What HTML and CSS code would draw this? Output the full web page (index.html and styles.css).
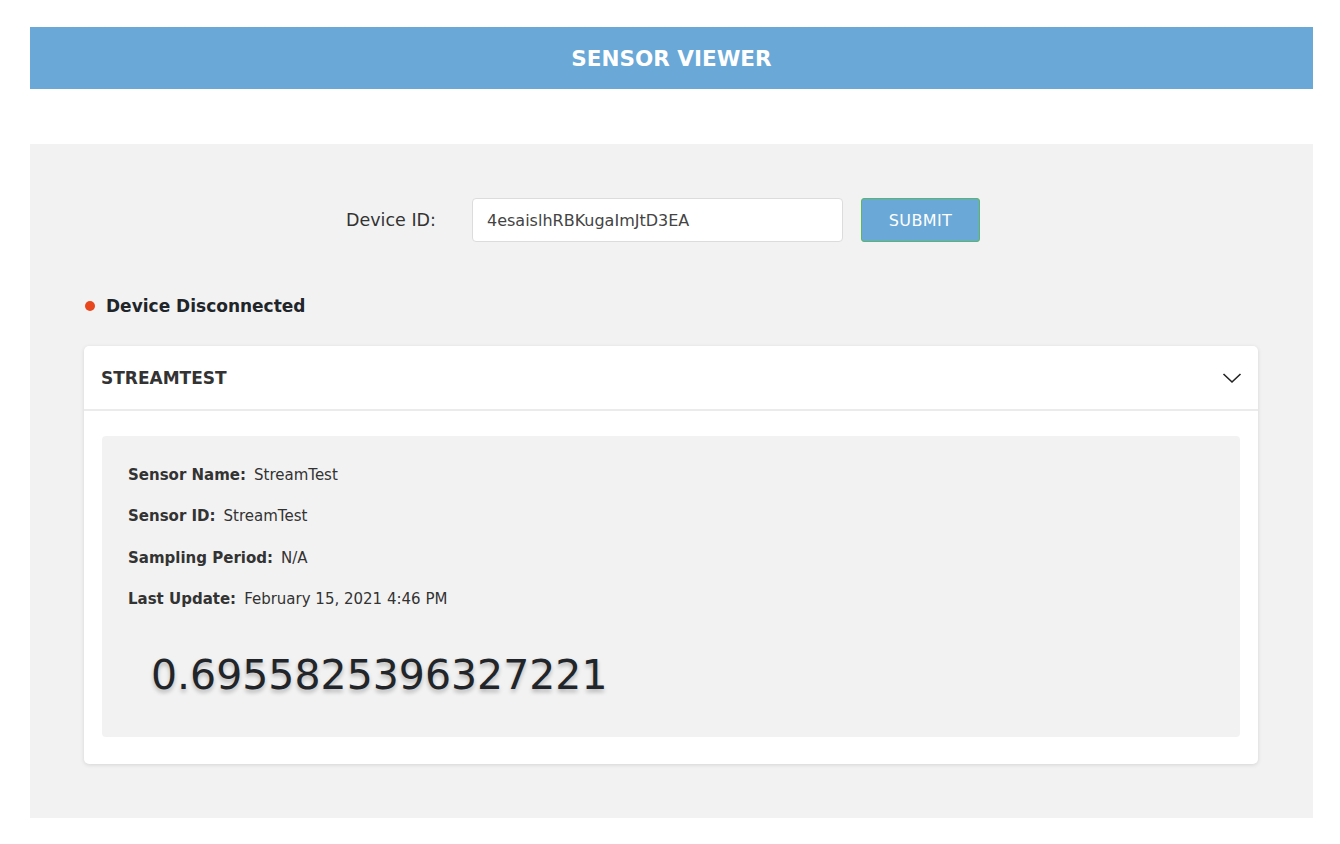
FILE: index.html
```html
<!DOCTYPE html>
<html>
<head>
<meta charset="utf-8">
<link rel="stylesheet" href="styles.css">
</head>
<body>
<div class="page">
  <header class="topbar"><h1 class="title">SENSOR VIEWER</h1></header>
  <main class="panel">
    <form class="device-form">
      <label class="device-label" for="dev">Device ID:</label>
      <input class="device-input" id="dev" type="text" value="4esaislhRBKugaImJtD3EA">
      <button class="submit-btn" type="button">SUBMIT</button>
    </form>
    <div class="status"><span class="dot"></span><span class="status-text">Device Disconnected</span></div>
    <section class="card">
      <div class="card-head">
        <span class="card-title">STREAMTEST</span>
        <svg class="chevron" width="20" height="12" viewBox="0 0 20 12"><polyline points="1.5,2 10,10 18.5,2" fill="none" stroke="#222" stroke-width="1.6"/></svg>
      </div>
      <div class="card-body">
        <div class="info">
          <div class="row"><span class="key">Sensor Name:</span><span class="val">StreamTest</span></div>
          <div class="row"><span class="key">Sensor ID:</span><span class="val">StreamTest</span></div>
          <div class="row"><span class="key">Sampling Period:</span><span class="val">N/A</span></div>
          <div class="row"><span class="key">Last Update:</span><span class="val">February 15, 2021 4:46 PM</span></div>
          <div class="reading">0.6955825396327221</div>
        </div>
      </div>
    </section>
  </main>
</div>
</body>
</html>
```
FILE: styles.css
```css
* { box-sizing: border-box; }
html, body { margin: 0; padding: 0; background: #fff; }
body { font-family: "DejaVu Sans", "Open Sans", sans-serif; color: #212529; }
.page { padding: 27px 27px 0 30px; }
.topbar {
  background: #69a8d7;
  height: 62px;
  display: flex;
  align-items: center;
  justify-content: center;
}
.title { margin: 0; color: #fff; font-size: 21.5px; font-weight: 700; }
.panel {
  margin-top: 55px;
  background: #f2f2f2;
  padding: 54px 55px 54px 54px;
}
.device-form {
  display: flex;
  align-items: center;
  justify-content: center;
  padding-right: 16px;
}
.device-label { font-size: 17.5px; color: #333; width: 126px; }
.device-input {
  width: 371px; height: 44px;
  border: 1px solid #dcdcdc; border-radius: 4px;
  background: #fff; padding: 0 14px;
  font-family: inherit; font-size: 16px; color: #444;
  margin-right: 18px;
}
.submit-btn {
  width: 119px; height: 44px;
  background: #69a8d7; color: #fff;
  border: 1px solid #5cb85c; border-radius: 3px;
  font-family: inherit; font-size: 16px; letter-spacing: 0.4px;
}
.status { display: flex; align-items: center; margin-top: 54px; padding-left: 1px; height: 20px; }
.dot { width: 10px; height: 10px; border-radius: 50%; background: #e8461d; margin-right: 11px; }
.status-text { font-size: 17px; font-weight: 700; color: #212529; line-height: 20px; }
.card {
  margin-top: 30px;
  background: #fff;
  border-radius: 5px;
  box-shadow: 0 1px 4px rgba(0,0,0,0.12);
}
.card-head {
  height: 65px;
  border-bottom: 2px solid #ebebeb;
  display: flex; align-items: center; justify-content: space-between;
  padding: 0 16px 0 17px;
}
.card-title { font-size: 17px; font-weight: 700; color: #333; }
.card-body { padding: 25px 18px 27px 18px; }
.info {
  background: #f2f2f2; border-radius: 4px;
  padding: 18px 26px 30px 26px;
  min-height: 301px;
}
.row { display: flex; align-items: center; height: 41.5px; font-size: 15px; }
.key { font-weight: 700; color: #333; margin-right: 8px; }
.val { color: #333; }
.reading {
  margin-top: 35px; margin-left: 23px;
  font-size: 41px; color: #212529;
  text-shadow: 0 3px 4px rgba(0,0,0,0.25);
  line-height: 1;
}
```
